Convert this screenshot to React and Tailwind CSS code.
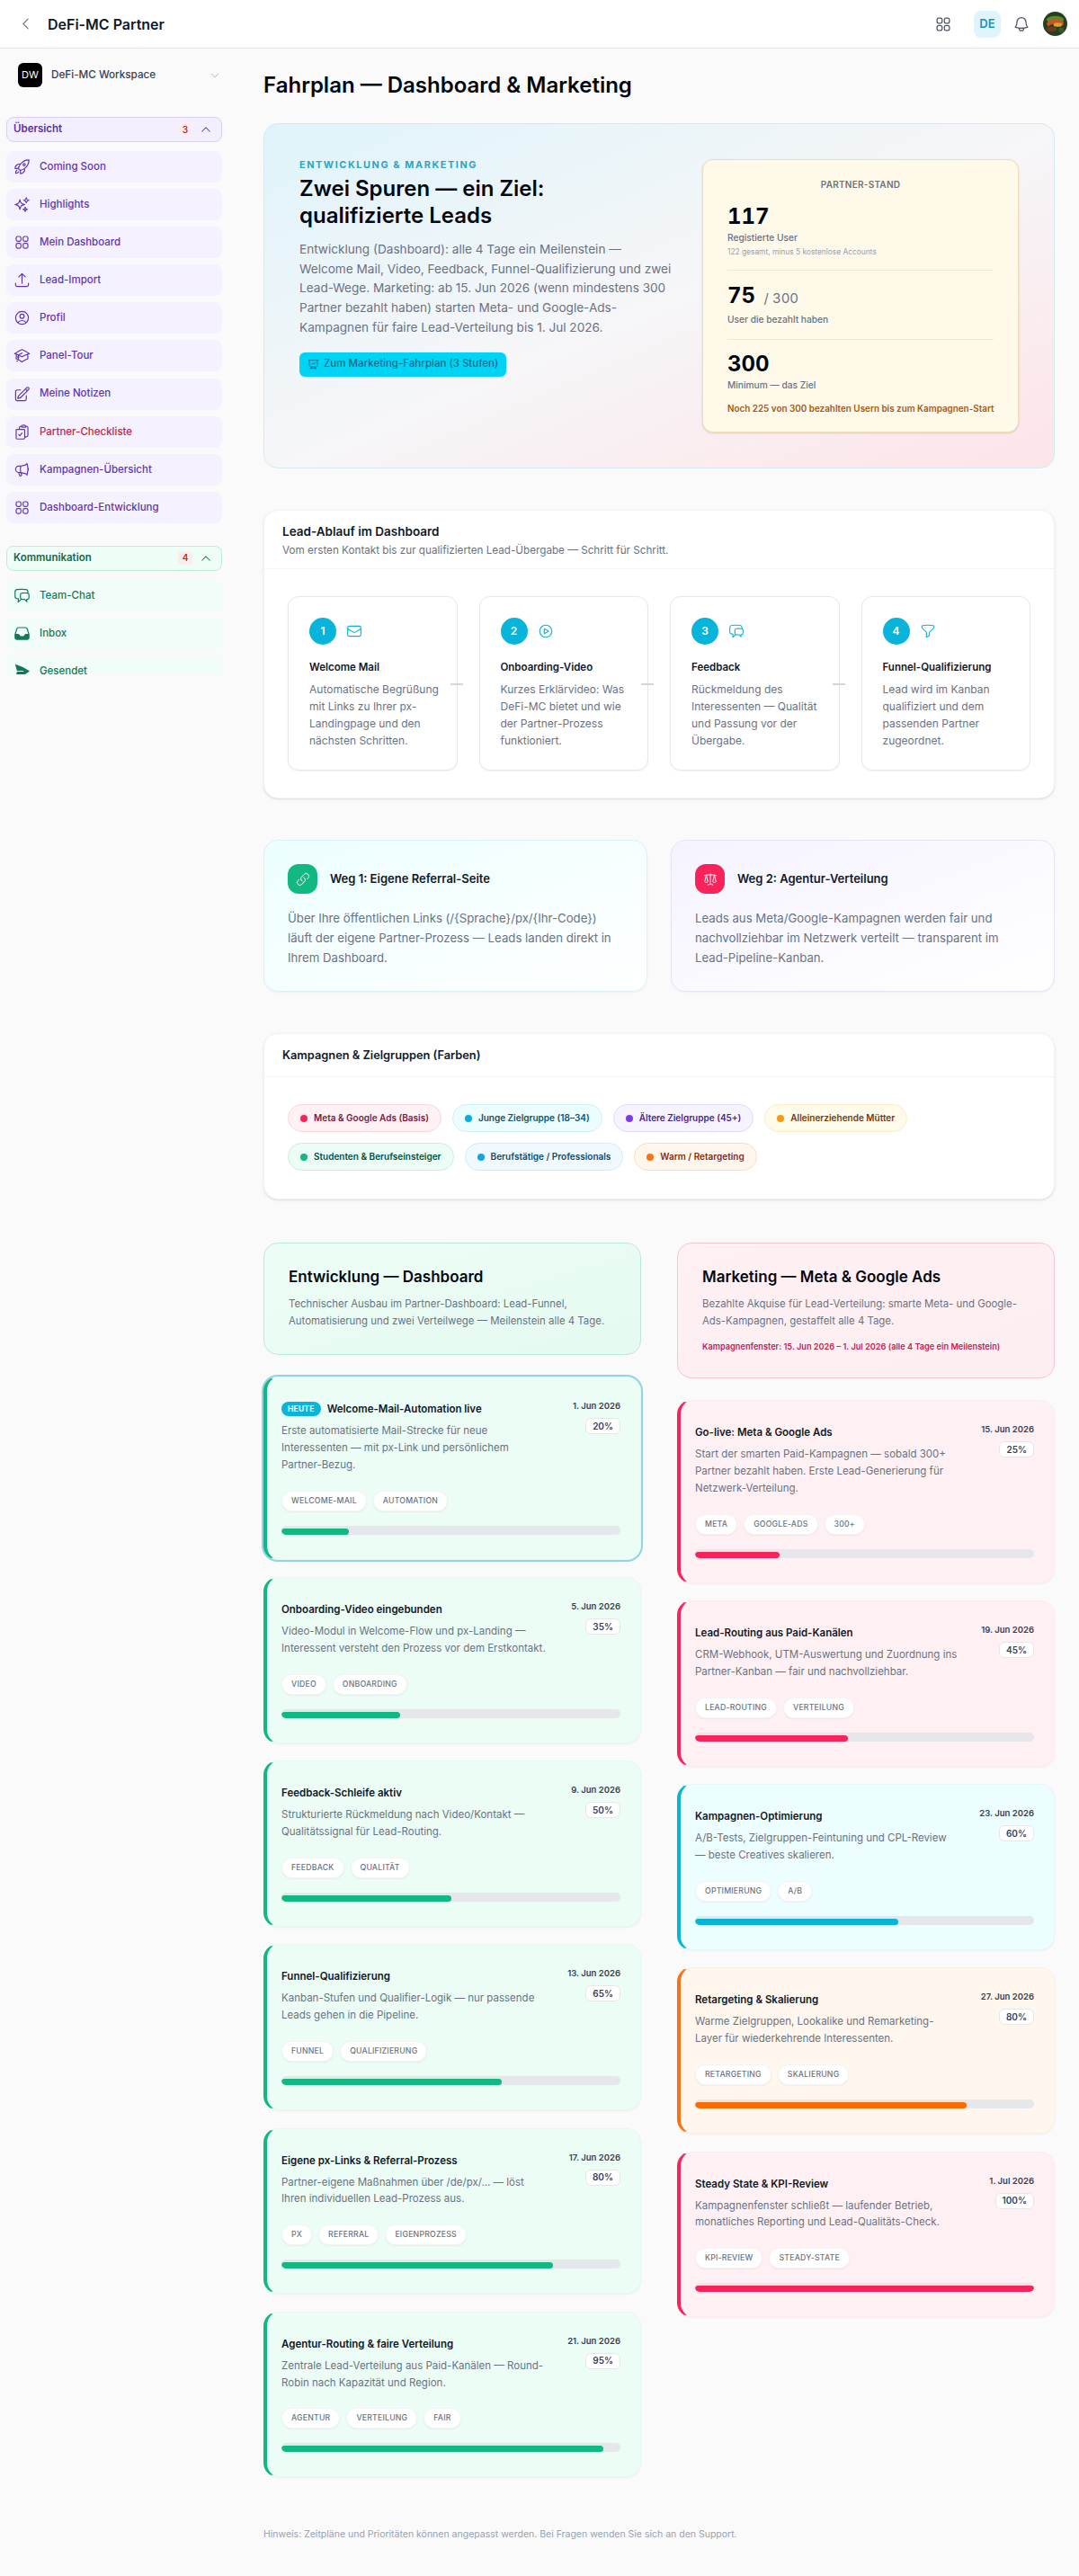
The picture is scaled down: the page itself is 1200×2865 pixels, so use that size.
import {
  HiOutlineRocketLaunch, HiOutlineSparkles, HiOutlineSquares2X2, HiOutlineArrowUpTray, HiOutlineUserCircle,
  HiOutlineAcademicCap, HiOutlinePencilSquare, HiOutlineClipboardDocumentCheck, HiOutlineMegaphone,
  HiOutlineChatBubbleLeftRight, HiInbox, HiPaperAirplane, HiOutlineBell, HiOutlineChevronLeft,
  HiOutlineChevronDown, HiChevronUp, HiOutlineEnvelope, HiOutlinePlayCircle, HiOutlineFunnel,
  HiOutlineLink, HiOutlineScale, HiOutlinePresentationChartLine,
} from 'react-icons/hi2'

const overview = [
  { label: 'Coming Soon', icon: HiOutlineRocketLaunch },
  { label: 'Highlights', icon: HiOutlineSparkles },
  { label: 'Mein Dashboard', icon: HiOutlineSquares2X2 },
  { label: 'Lead-Import', icon: HiOutlineArrowUpTray },
  { label: 'Profil', icon: HiOutlineUserCircle },
  { label: 'Panel-Tour', icon: HiOutlineAcademicCap },
  { label: 'Meine Notizen', icon: HiOutlinePencilSquare },
  { label: 'Partner-Checkliste', icon: HiOutlineClipboardDocumentCheck, alert: true },
  { label: 'Kampagnen-Übersicht', icon: HiOutlineMegaphone },
  { label: 'Dashboard-Entwicklung', icon: HiOutlineSquares2X2 },
]

const comms = [
  { label: 'Team-Chat', icon: HiOutlineChatBubbleLeftRight },
  { label: 'Inbox', icon: HiInbox },
  { label: 'Gesendet', icon: HiPaperAirplane },
]

const steps = [
  { n: 1, title: 'Welcome Mail', text: 'Automatische Begrüßung mit Links zu Ihrer px-Landingpage und den nächsten Schritten.', icon: HiOutlineEnvelope },
  { n: 2, title: 'Onboarding-Video', text: 'Kurzes Erklärvideo: Was DeFi-MC bietet und wie der Partner-Prozess funktioniert.', icon: HiOutlinePlayCircle },
  { n: 3, title: 'Feedback', text: 'Rückmeldung des Interessenten — Qualität und Passung vor der Übergabe.', icon: HiOutlineChatBubbleLeftRight },
  { n: 4, title: 'Funnel-Qualifizierung', text: 'Lead wird im Kanban qualifiziert und dem passenden Partner zugeordnet.', icon: HiOutlineFunnel },
]

const pillsTop = [
  { label: 'Meta & Google Ads (Basis)', box: 'bg-[#fff1f4] border-[#fbd5de] text-[#7a1a3a]', dot: 'bg-[#f9235c]' },
  { label: 'Junge Zielgruppe (18–34)', box: 'bg-[#ecfdff] border-[#cdf1f7] text-[#164e63]', dot: 'bg-[#06b0d8]' },
  { label: 'Ältere Zielgruppe (45+)', box: 'bg-[#f5f3ff] border-[#e0daff] text-[#4c1d95]', dot: 'bg-[#7c3aed]' },
  { label: 'Alleinerziehende Mütter', box: 'bg-[#fffbeb] border-[#fdebc8] text-[#78350f]', dot: 'bg-[#f59e0b]' },
]

const pillsBottom = [
  { label: 'Studenten & Berufseinsteiger', box: 'bg-[#ecfdf5] border-[#c4f0dc] text-[#064e3b]', dot: 'bg-[#10b981]' },
  { label: 'Berufstätige / Professionals', box: 'bg-[#f0f9ff] border-[#d3eafa] text-[#0c4a6e]', dot: 'bg-[#0ea5e9]' },
  { label: 'Warm / Retargeting', box: 'bg-[#fff7ed] border-[#fedcb8] text-[#7c2d12]', dot: 'bg-[#f97316]' },
]

const green = { card: 'bg-[#ebfdf5] border-[#e6f8f0] border-l-[#10b981]', bar: 'bg-[#10b981]' }
const rose = { card: 'bg-[#fff1f3] border-[#fcecef] border-l-[#f9235c]', bar: 'bg-[#f9235c]' }
const cyan = { card: 'bg-[#ecfeff] border-[#e3f8fa] border-l-[#06b6d4]', bar: 'bg-[#06b6d4]' }
const orange = { card: 'bg-[#fff7ed] border-[#fcf0e4] border-l-[#f97316]', bar: 'bg-[#ff6b00]' }

const devMilestones = [
  { title: 'Welcome-Mail-Automation live', date: '1. Jun 2026', pct: 20, today: true, text: 'Erste automatisierte Mail-Strecke für neue Interessenten — mit px-Link und persönlichem Partner-Bezug.', tags: ['Welcome-Mail', 'Automation'], tone: green },
  { title: 'Onboarding-Video eingebunden', date: '5. Jun 2026', pct: 35, text: 'Video-Modul in Welcome-Flow und px-Landing — Interessent versteht den Prozess vor dem Erstkontakt.', tags: ['Video', 'Onboarding'], tone: green },
  { title: 'Feedback-Schleife aktiv', date: '9. Jun 2026', pct: 50, text: 'Strukturierte Rückmeldung nach Video/Kontakt — Qualitätssignal für Lead-Routing.', tags: ['Feedback', 'Qualität'], tone: green },
  { title: 'Funnel-Qualifizierung', date: '13. Jun 2026', pct: 65, text: 'Kanban-Stufen und Qualifier-Logik — nur passende Leads gehen in die Pipeline.', tags: ['Funnel', 'Qualifizierung'], tone: green },
  { title: 'Eigene px-Links & Referral-Prozess', date: '17. Jun 2026', pct: 80, text: 'Partner-eigene Maßnahmen über /de/px/… — löst Ihren individuellen Lead-Prozess aus.', tags: ['PX', 'Referral', 'Eigenprozess'], tone: green },
  { title: 'Agentur-Routing & faire Verteilung', date: '21. Jun 2026', pct: 95, text: 'Zentrale Lead-Verteilung aus Paid-Kanälen — Round-Robin nach Kapazität und Region.', tags: ['Agentur', 'Verteilung', 'Fair'], tone: green },
]

const marketingMilestones = [
  { title: 'Go-live: Meta & Google Ads', date: '15. Jun 2026', pct: 25, text: 'Start der smarten Paid-Kampagnen — sobald 300+ Partner bezahlt haben. Erste Lead-Generierung für Netzwerk-Verteilung.', tags: ['Meta', 'Google-Ads', '300+'], tone: rose },
  { title: 'Lead-Routing aus Paid-Kanälen', date: '19. Jun 2026', pct: 45, text: 'CRM-Webhook, UTM-Auswertung und Zuordnung ins Partner-Kanban — fair und nachvollziehbar.', tags: ['Lead-Routing', 'Verteilung'], tone: rose },
  { title: 'Kampagnen-Optimierung', date: '23. Jun 2026', pct: 60, text: 'A/B-Tests, Zielgruppen-Feintuning und CPL-Review\n— beste Creatives skalieren.', tags: ['Optimierung', 'A/B'], tone: cyan },
  { title: 'Retargeting & Skalierung', date: '27. Jun 2026', pct: 80, text: 'Warme Zielgruppen, Lookalike und Remarketing-\nLayer für wiederkehrende Interessenten.', tags: ['Retargeting', 'Skalierung'], tone: orange },
  { title: 'Steady State & KPI-Review', date: '1. Jul 2026', pct: 100, text: 'Kampagnenfenster schließt — laufender Betrieb, monatliches Reporting und Lead-Qualitäts-Check.', tags: ['KPI-Review', 'Steady-State'], tone: rose },
]

function SectionHeader({ label, count, box }) {
  return (
    <div className={`flex items-center justify-between h-[28px] pl-[7px] pr-[10px] rounded-lg border ${box}`}>
      <span className="text-[11.5px] font-semibold">{label}</span>
      <div className="flex items-center gap-[8px]">
        <span className="w-[16px] h-[15px] flex items-center justify-center rounded bg-[#fdecec] text-[10px] font-semibold text-[#c0263a]">{count}</span>
        <HiChevronUp className="w-[14px] h-[14px]" />
      </div>
    </div>
  )
}

function NavItem({ item, tone }) {
  const Icon = item.icon
  return (
    <div className={`flex items-center gap-[10px] h-[35px] pl-[8px] rounded-lg ${tone}`}>
      <Icon className="w-[19px] h-[19px] shrink-0" />
      <span className={`text-[11.5px] font-medium ${item.alert ? 'text-[#c8233f]' : ''}`}>{item.label}</span>
    </div>
  )
}

function Avatar() {
  return (
    <svg viewBox="0 0 28 28" className="w-[27px] h-[27px] rounded-full">
      <rect width="28" height="28" fill="#24401f" />
      <ellipse cx="14" cy="9" rx="10" ry="4" fill="#5f8a2c" />
      <path d="M4 14c3-6 15-7 20-2l-1 4c-5-3-12-3-17 1z" fill="#c9542a" />
      <ellipse cx="17" cy="15" rx="5" ry="2.4" fill="#d9a12e" />
      <ellipse cx="10" cy="20" rx="6" ry="3" fill="#6d3a22" />
      <circle cx="21" cy="21" r="3" fill="#3b5a2a" />
    </svg>
  )
}

function Milestone({ m }) {
  return (
    <div className={`rounded-2xl border border-l-[4px] pt-[26px] pb-[27px] pl-[16px] pr-[22px] shadow-xs ${m.tone.card} ${m.today ? 'ring-2 ring-[#8fd5e5]' : ''}`}>
      <div className="flex justify-between">
        <div className="w-[297px]">
          <div className="flex items-center gap-[7px] min-h-[18px]">
            {m.today && <span className="h-[16px] px-[7px] flex items-center rounded-full bg-[#0ab4d8] text-white text-[8.5px] font-bold tracking-wide">HEUTE</span>}
            <h3 className="text-[11.5px] font-semibold leading-[18px] text-gray-900">{m.title}</h3>
          </div>
          <p className="mt-[6px] text-[11.5px] leading-[18.85px] whitespace-pre-line text-gray-500">{m.text}</p>
        </div>
        <div className="flex flex-col items-end -mt-[2px]">
          <span className="text-[9.5px] font-semibold leading-[16px] text-gray-700">{m.date}</span>
          <span className="mt-[5px] h-[18px] px-[7px] flex items-center rounded-md border border-gray-200 bg-white text-[10px] font-semibold text-gray-700">{m.pct}%</span>
        </div>
      </div>
      <div className="flex gap-[7px] mt-[19px]">
        {m.tags.map(tag => (
          <span key={tag} className="h-[23px] px-[10px] flex items-center rounded-full border border-gray-100 bg-white shadow-xs text-[8.7px] font-medium uppercase tracking-wide text-gray-500">{tag}</span>
        ))}
      </div>
      <div className="mt-[16px] h-[10px] rounded-full bg-[#e5e7eb] flex items-end overflow-hidden">
        <div className={`h-[7px] rounded-full ${m.tone.bar}`} style={{ width: `${m.pct}%` }} />
      </div>
    </div>
  )
}

function Pill({ pill }) {
  return (
    <span className={`h-[31px] px-[13px] flex items-center gap-[7px] rounded-full border text-[10px] font-semibold ${pill.box}`}>
      <span className={`w-[8px] h-[8px] rounded-full ${pill.dot}`} />
      {pill.label}
    </span>
  )
}

export default function App() {
  return (
    <div className="min-h-[2865px] bg-[#fafafa] font-['Inter',sans-serif]">
      <header className="h-[54px] bg-white border-b border-gray-200 flex items-center justify-between pl-[20px] pr-[13px]">
        <div className="flex items-center gap-[16px]">
          <HiOutlineChevronLeft className="w-[17px] h-[17px] text-gray-500" />
          <span className="text-[16px] font-semibold text-gray-900">DeFi-MC Partner</span>
        </div>
        <div className="flex items-center">
          <HiOutlineSquares2X2 className="w-[20px] h-[20px] text-gray-600 mr-[24px]" />
          <span className="w-[30px] h-[30px] flex items-center justify-center rounded-lg bg-[#e0f5fb] text-[#0e97c0] text-[13px] font-semibold mr-[13px]">DE</span>
          <HiOutlineBell className="w-[20px] h-[20px] text-gray-600 mr-[14px]" />
          <Avatar />
        </div>
      </header>

      <div className="flex">
        <aside className="w-[262px] shrink-0 pl-[7px] pr-[15px]">
          <div className="flex items-center h-[27px] mt-[16px] pl-[13px] pr-[2px]">
            <span className="w-[27px] h-[27px] flex items-center justify-center rounded-md bg-black text-white text-[11px]">DW</span>
            <span className="ml-[10px] flex-1 text-[11.7px] font-medium text-gray-700">DeFi-MC Workspace</span>
            <HiOutlineChevronDown className="w-[12px] h-[12px] text-gray-400" />
          </div>
          <div className="mt-[33px] h-[620px] overflow-hidden">
            <SectionHeader label="Übersicht" count="3" box="bg-[#f3effe] border-[#d9cff5] text-[#5b2fa8]" />
            <div className="mt-[10px] flex flex-col gap-[7.1px]">
              {overview.map(item => <NavItem key={item.label} item={item} tone="bg-[#f5f1fe] text-[#5f35ae]" />)}
            </div>
            <div className="mt-[25px]">
              <SectionHeader label="Kommunikation" count="4" box="bg-[#effdf7] border-[#bdecd9] text-[#11694f]" />
            </div>
            <div className="mt-[10px] flex flex-col gap-[7.1px]">
              {comms.map(item => <NavItem key={item.label} item={item} tone="bg-[#f1fdf8] text-[#0f7a5a]" />)}
            </div>
          </div>
        </aside>

        <main className="flex-1 min-w-0 pl-[31px] pr-[27px] pt-[25px]">
          <h1 className="text-[24px] leading-[32px] font-semibold text-gray-950">Fahrplan — Dashboard &amp; Marketing</h1>

          <section className="mt-[26px] rounded-2xl border border-[#d5e9f0] bg-gradient-to-br from-[#dff4fa] via-[#f6f6f8] to-[#fde4e8] p-[39px] flex justify-between items-start gap-[28px]">
            <div className="flex-1 min-w-0">
              <p className="text-[10.8px] font-bold uppercase tracking-[0.15em] leading-[14px] text-[#2aa5c4]">Entwicklung &amp; Marketing</p>
              <h2 className="mt-[4px] text-[24px] leading-[30px] font-semibold text-gray-950">Zwei Spuren — ein Ziel:<br />qualifizierte Leads</h2>
              <p className="mt-[12px] text-[13.6px] leading-[21.7px] text-gray-500">Entwicklung (Dashboard): alle 4 Tage ein Meilenstein — Welcome Mail, Video, Feedback, Funnel-Qualifizierung und zwei Lead-Wege. Marketing: ab 15. Jun 2026 (wenn mindestens 300 Partner bezahlt haben) starten Meta- und Google-Ads-Kampagnen für faire Lead-Verteilung bis 1. Jul 2026.</p>
              <button className="mt-[16px] h-[27px] px-[9px] flex items-center gap-[5px] rounded-md bg-[#00d4f5] text-[#1d6a8a] text-[11.5px] font-medium">
                <HiOutlinePresentationChartLine className="w-[13px] h-[13px]" />
                Zum Marketing-Fahrplan (3 Stufen)
              </button>
            </div>
            <div className="w-[352px] shrink-0 rounded-xl border border-[#f0deb4] bg-[#fef9e8] shadow-sm px-[27px] pt-[20px] pb-[18px]">
              <p className="text-center text-[10px] font-semibold tracking-wide leading-[14px] text-gray-500">PARTNER-STAND</p>
              <p className="mt-[13px] text-[24px] font-bold tabular-nums leading-[32px] text-gray-950">117</p>
              <p className="text-[10.2px] font-medium leading-[15px] text-gray-500">Registierte User</p>
              <p className="mt-[1px] text-[8.4px] leading-[14px] text-gray-400">122 gesamt, minus 5 kostenlose Accounts</p>
              <div className="mt-[13px] h-px bg-[#f0e8d0]" />
              <p className="mt-[12px] text-[24px] font-bold tabular-nums leading-[32px] text-gray-950">75 <span className="ml-[3px] text-[15px] font-normal text-gray-500">/ 300</span></p>
              <p className="text-[10.2px] font-medium leading-[15px] text-gray-500">User die bezahlt haben</p>
              <div className="mt-[14px] h-px bg-[#f0e8d0]" />
              <p className="mt-[11px] text-[24px] font-bold tabular-nums leading-[32px] text-gray-950">300</p>
              <p className="text-[10.2px] font-medium leading-[15px] text-gray-500">Minimum — das Ziel</p>
              <p className="mt-[11px] text-[9.9px] font-semibold leading-[15px] whitespace-nowrap text-[#a05a20]">Noch 225 von 300 bezahlten Usern bis zum Kampagnen-Start</p>
            </div>
          </section>

          <section className="mt-[46px] rounded-2xl border border-gray-100 bg-white shadow">
            <div className="h-[65px] px-[20px] pt-[13px] border-b border-gray-100">
              <h2 className="text-[13.5px] font-semibold leading-[20px] text-gray-900">Lead-Ablauf im Dashboard</h2>
              <p className="mt-[2px] text-[11.7px] leading-[18px] text-gray-500">Vom ersten Kontakt bis zur qualifizierten Lead-Übergabe — Schritt für Schritt.</p>
            </div>
            <div className="px-[26px] py-[30px] grid grid-cols-4 gap-[24px]">
              {steps.map((step, i) => {
                const Icon = step.icon
                return (
                  <div key={step.n} className="relative h-[194px] rounded-xl border border-gray-200 bg-white shadow-xs pl-[23px] pr-[12px] pt-[23px]">
                    <div className="flex items-center gap-[11px]">
                      <span className="w-[30px] h-[30px] flex items-center justify-center rounded-full bg-[#08b4d9] text-white text-[12px] font-semibold">{step.n}</span>
                      <Icon className="w-[18px] h-[18px] text-[#08b4d9]" />
                    </div>
                    <h3 className="mt-[16px] text-[11.5px] font-semibold leading-[18px] text-gray-900">{step.title}</h3>
                    <p className="mt-[6px] text-[12px] leading-[19px] text-gray-500">{step.text}</p>
                    {i < 3 && <span className="absolute top-1/2 -right-[7px] w-[14px] h-[1.5px] bg-gray-300" />}
                  </div>
                )
              })}
            </div>
          </section>

          <div className="mt-[46px] grid grid-cols-2 gap-[26px]">
            <div className="rounded-2xl border border-[#d9f2f5] bg-gradient-to-br from-[#ecfeff] to-white shadow-xs px-[26px] pt-[26px] pb-[26px]">
              <div className="flex items-center gap-[14px]">
                <span className="w-[33px] h-[33px] flex items-center justify-center rounded-xl bg-[#10b981] text-white"><HiOutlineLink className="w-[16px] h-[16px]" /></span>
                <h3 className="text-[13px] font-semibold text-gray-900">Weg 1: Eigene Referral-Seite</h3>
              </div>
              <p className="mt-[16px] text-[13.2px] leading-[22px] text-gray-500">Über Ihre öffentlichen Links (/&#123;Sprache&#125;/px/&#123;Ihr-Code&#125;) läuft der eigene Partner-Prozess — Leads landen direkt in Ihrem Dashboard.</p>
            </div>
            <div className="rounded-2xl border border-[#e8e4f8] bg-gradient-to-br from-[#f5f3ff] to-white shadow-xs px-[26px] pt-[26px] pb-[26px]">
              <div className="flex items-center gap-[14px]">
                <span className="w-[33px] h-[33px] flex items-center justify-center rounded-xl bg-[#f9235c] text-white"><HiOutlineScale className="w-[16px] h-[16px]" /></span>
                <h3 className="text-[13px] font-semibold text-gray-900">Weg 2: Agentur-Verteilung</h3>
              </div>
              <p className="mt-[16px] text-[13.2px] leading-[22px] text-gray-500">Leads aus Meta/Google-Kampagnen werden fair und nachvollziehbar im Netzwerk verteilt — transparent im Lead-Pipeline-Kanban.</p>
            </div>
          </div>

          <section className="mt-[46px] rounded-2xl border border-gray-100 bg-white shadow">
            <div className="h-[48px] px-[20px] flex items-center border-b border-gray-100">
              <h2 className="text-[12.8px] font-semibold text-gray-900">Kampagnen &amp; Zielgruppen (Farben)</h2>
            </div>
            <div className="px-[26px] pt-[30px] pb-[31px] flex flex-col gap-[12px]">
              <div className="flex gap-[12px]">{pillsTop.map(p => <Pill key={p.label} pill={p} />)}</div>
              <div className="flex gap-[12px]">{pillsBottom.map(p => <Pill key={p.label} pill={p} />)}</div>
            </div>
          </section>

          <div className="mt-[48px] grid grid-cols-2 gap-[40px] items-start">
            <div>
              <div className="h-[125px] rounded-2xl border border-[#b9ecd8] bg-gradient-to-br from-[#ecfdf5] to-[#e6faf1] px-[27px] pt-[24px] mb-[24px]">
                <h2 className="text-[17px] font-semibold leading-[26px] text-gray-950">Entwicklung — Dashboard</h2>
                <p className="mt-[8px] text-[11.4px] leading-[19px] text-gray-500">Technischer Ausbau im Partner-Dashboard: Lead-Funnel, Automatisierung und zwei Verteilwege — Meilenstein alle 4 Tage.</p>
              </div>
              <div className="flex flex-col gap-[19.5px]">
                {devMilestones.map(m => <Milestone key={m.title} m={m} />)}
              </div>
            </div>
            <div>
              <div className="h-[151px] rounded-2xl border border-[#f9c4d0] bg-gradient-to-br from-[#fff1f3] to-[#fdeff1] px-[27px] pt-[24px] mb-[24px]">
                <h2 className="text-[17px] font-semibold leading-[26px] text-gray-950">Marketing — Meta &amp; Google Ads</h2>
                <p className="mt-[8px] text-[11.4px] leading-[19px] text-gray-500">Bezahlte Akquise für Lead-Verteilung: smarte Meta- und Google-Ads-Kampagnen, gestaffelt alle 4 Tage.</p>
                <p className="mt-[11px] text-[9.2px] font-semibold leading-[15px] text-[#be2454]">Kampagnenfenster: 15. Jun 2026 – 1. Jul 2026 (alle 4 Tage ein Meilenstein)</p>
              </div>
              <div className="flex flex-col gap-[19.5px]">
                {marketingMilestones.map(m => <Milestone key={m.title} m={m} />)}
              </div>
            </div>
          </div>

          <p className="mt-[56px] text-[10.5px] leading-[16px] text-gray-400">Hinweis: Zeitpläne und Prioritäten können angepasst werden. Bei Fragen wenden Sie sich an den Support.</p>
        </main>
      </div>
    </div>
  )
}
